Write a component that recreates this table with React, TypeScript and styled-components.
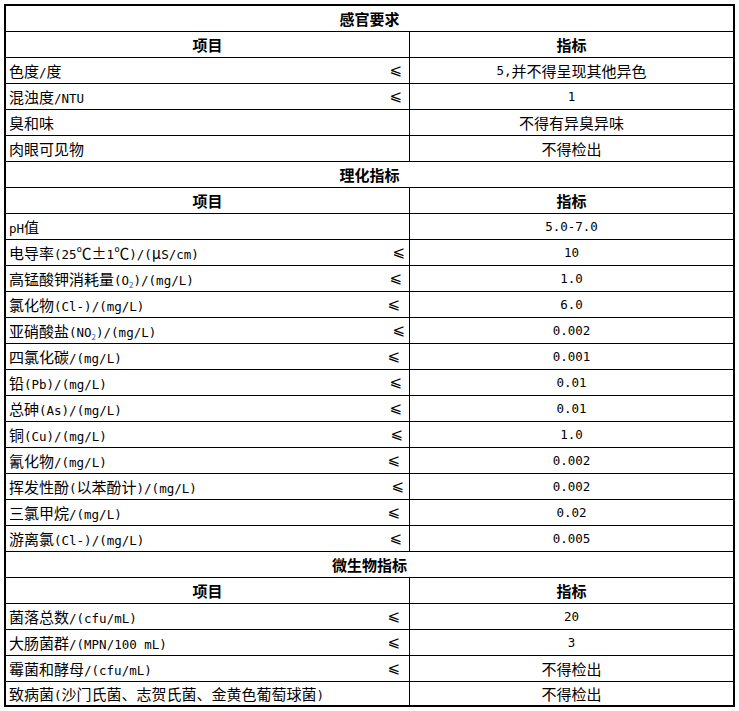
import * as React from 'react';
import styled, { createGlobalStyle } from 'styled-components';

interface ItemRow {
  name: string;
  value: string;
  le?: number; // distance of the ≤ sign from the column divider
}

interface Section {
  title: string;
  rows: ItemRow[];
}

const sections: Section[] = [
  {
    title: '感官要求',
    rows: [
      { name: '色度/度', value: '5,并不得呈现其他异色', le: 7 },
      { name: '混浊度/NTU', value: '1', le: 7 },
      { name: '臭和味', value: '不得有异臭异味' },
      { name: '肉眼可见物', value: '不得检出' },
    ],
  },
  {
    title: '理化指标',
    rows: [
      { name: 'pH值', value: '5.0-7.0' },
      { name: '电导率(25℃±1℃)/(μS/cm)', value: '10', le: 4 },
      { name: '高锰酸钾消耗量(O₂)/(mg/L)', value: '1.0', le: 7 },
      { name: '氯化物(Cl-)/(mg/L)', value: '6.0', le: 9 },
      { name: '亚硝酸盐(NO₂)/(mg/L)', value: '0.002', le: 4 },
      { name: '四氯化碳/(mg/L)', value: '0.001', le: 9 },
      { name: '铅(Pb)/(mg/L)', value: '0.01', le: 7 },
      { name: '总砷(As)/(mg/L)', value: '0.01', le: 7 },
      { name: '铜(Cu)/(mg/L)', value: '1.0', le: 6 },
      { name: '氰化物/(mg/L)', value: '0.002', le: 9 },
      { name: '挥发性酚(以苯酚计)/(mg/L)', value: '0.002', le: 5 },
      { name: '三氯甲烷/(mg/L)', value: '0.02', le: 9 },
      { name: '游离氯(Cl-)/(mg/L)', value: '0.005', le: 7 },
    ],
  },
  {
    title: '微生物指标',
    rows: [
      { name: '菌落总数/(cfu/mL)', value: '20', le: 9 },
      { name: '大肠菌群/(MPN/100 mL)', value: '3', le: 9 },
      { name: '霉菌和酵母/(cfu/mL)', value: '不得检出', le: 9 },
      { name: '致病菌(沙门氏菌、志贺氏菌、金黄色葡萄球菌)', value: '不得检出' },
    ],
  },
];

const GlobalStyle = createGlobalStyle`
  html, body {
    margin: 0;
    background: #fff;
  }
  body {
    padding: 4px;
    font-family: "Noto Sans CJK SC", "Noto Sans", sans-serif;
    font-size: 15px;
    color: #000;
  }
`;

const Sheet = styled.div`
  width: 727px;
  border: 2px solid #000;
  display: flex;
  flex-direction: column;
`;

const Row = styled.div`
  display: flex;
  height: 25px;

  & + & {
    border-top: 1px solid #000;
  }

  &:last-child {
    height: 23px;
  }
`;

const Title = styled.div`
  flex: 1;
  display: flex;
  align-items: center;
  justify-content: center;
  font-weight: 700;
`;

const LeftCell = styled.div<{ $head?: boolean }>`
  width: 404px;
  border-right: 1px solid #000;
  display: flex;
  align-items: center;
  justify-content: ${(p) => (p.$head ? 'center' : 'space-between')};
  padding-left: ${(p) => (p.$head ? 0 : 3)}px;
  box-sizing: border-box;
  font-weight: ${(p) => (p.$head ? 700 : 400)};
  white-space: nowrap;
`;

const RightCell = styled.div<{ $head?: boolean }>`
  flex: 1;
  display: flex;
  align-items: center;
  justify-content: center;
  font-weight: ${(p) => (p.$head ? 700 : 400)};
  white-space: nowrap;
`;

const Latin = styled.span`
  font-family: "DejaVu Sans Mono", "Liberation Mono", monospace;
  font-size: 12.5px;
  white-space: pre;
`;

const Sub = styled.span`
  font-size: 8px;
  color: #3a5fae;
  position: relative;
  top: 3px;
`;

const LeSign = styled.span<{ $gap: number }>`
  font-family: "DejaVu Sans", sans-serif;
  font-size: 15px;
  margin-right: ${(p) => p.$gap}px;
  position: relative;
  top: -1px;
`;

function Txt({ children }: { children: string }) {
  const parts = children.split(/([\x20-\x7e]+|₂)/).filter(Boolean);
  return (
    <>
      {parts.map((part, i) => {
        if (part === '₂') return <Sub key={i}>2</Sub>;
        if (/^[\x20-\x7e]+$/.test(part)) return <Latin key={i}>{part}</Latin>;
        return <span key={i}>{part}</span>;
      })}
    </>
  );
}

export default function App() {
  return (
    <>
      <GlobalStyle />
      <Sheet>
        {sections.map((section) => (
          <React.Fragment key={section.title}>
            <Row>
              <Title>{section.title}</Title>
            </Row>
            <Row>
              <LeftCell $head>项目</LeftCell>
              <RightCell $head>指标</RightCell>
            </Row>
            {section.rows.map((row) => (
              <Row key={row.name}>
                <LeftCell>
                  <span>
                    <Txt>{row.name}</Txt>
                  </span>
                  {row.le !== undefined && <LeSign $gap={row.le}>⩽</LeSign>}
                </LeftCell>
                <RightCell>
                  <Txt>{row.value}</Txt>
                </RightCell>
              </Row>
            ))}
          </React.Fragment>
        ))}
      </Sheet>
    </>
  );
}
